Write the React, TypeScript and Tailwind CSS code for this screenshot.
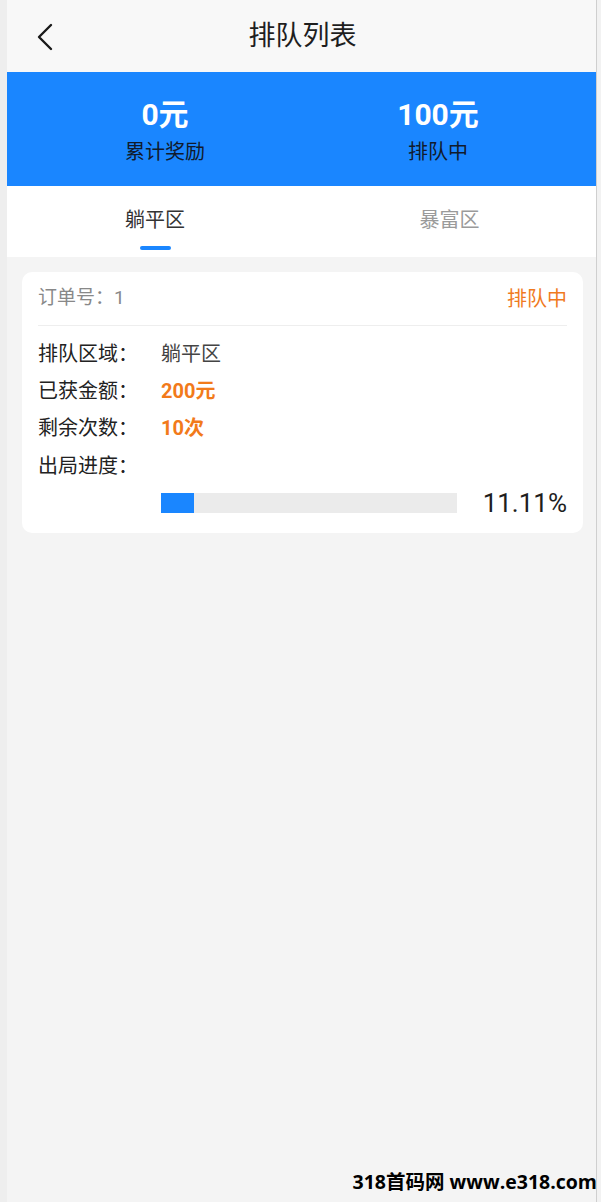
import React from 'react'

const font = { fontFamily: 'Roboto, "Noto Sans CJK SC", sans-serif' }

function Stat({ value, label }: { value: string; label: string }) {
  return (
    <div className="w-[273px] flex flex-col items-center">
      <div className="text-[30px] font-bold text-white leading-[36px]">{value}</div>
      <div className="text-[20px] text-[#111a2c] leading-[28px] mt-[5px]">{label}</div>
    </div>
  )
}

function Row({ label, children }: { label: string; children?: React.ReactNode }) {
  return (
    <div className="flex items-center h-[37px]">
      <div className="w-[123px] text-[20px] text-[#222]">{label}</div>
      {children}
    </div>
  )
}

export default function App() {
  const progress = 11.11
  return (
    <div className="relative flex w-[601px] h-[1202px] overflow-hidden bg-[#f0f0f0]" style={font}>
      <div className="w-[7px] bg-[#eeeeee]" />
      <div className="w-[589px] flex flex-col bg-[#f4f4f4]">
        {/* header */}
        <div className="h-[72px] flex items-center relative bg-[#f8f8f8]">
          <svg className="absolute left-[26px] top-[22px]" width="28" height="30" viewBox="0 0 28 30">
            <path d="M18 3 L6 15 L18 27" fill="none" stroke="#1a1a1a" strokeWidth="2.4" strokeLinecap="round" strokeLinejoin="round" />
          </svg>
          <div className="flex-1 text-center text-[27px] text-[#1e1e1e] pl-[2px]">排队列表</div>
        </div>

        {/* summary */}
        <div className="h-[114px] bg-[#1a86ff] flex justify-center items-center pt-[4px]">
          <Stat value="0元" label="累计奖励" />
          <Stat value="100元" label="排队中" />
        </div>

        {/* tabs */}
        <div className="h-[71px] bg-white flex">
          <div className="w-[296px] flex flex-col items-center pt-[20px]">
            <div className="text-[20px] text-[#333] leading-[28px]">躺平区</div>
            <div className="mt-[12px] w-[31px] h-[4px] rounded-full bg-[#1a86ff]" />
          </div>
          <div className="flex-1 flex flex-col items-center pt-[20px]">
            <div className="text-[20px] text-[#9a9a9a] leading-[28px]">暴富区</div>
          </div>
        </div>

        {/* card */}
        <div className="ml-[15px] mr-[13px] mt-[15px] bg-white rounded-[10px] px-[16px] pb-[13px]">
          <div className="h-[54px] flex items-center justify-between border-b border-[#eeeeee]">
            <div className="text-[19px] text-[#888]">订单号：1</div>
            <div className="text-[20px] text-[#f07a1e]">排队中</div>
          </div>
          <div className="pt-[9px]">
            <Row label="排队区域：">
              <div className="text-[20px] text-[#444]">躺平区</div>
            </Row>
            <Row label="已获金额：">
              <div className="text-[20px] font-bold text-[#f27a1a]">200元</div>
            </Row>
            <Row label="剩余次数：">
              <div className="text-[20px] font-bold text-[#f27a1a]">10次</div>
            </Row>
            <div className="h-[40px] flex items-center text-[20px] text-[#222]">出局进度：</div>
            <div className="flex items-center pl-[123px] h-[34px]">
              <div className="w-[296px] h-[20px] bg-[#ebebeb]">
                <div className="h-full bg-[#1a86ff]" style={{ width: `${progress}%` }} />
              </div>
              <div className="flex-1 text-right text-[26px] text-[#1e1e1e]">{progress}%</div>
            </div>
          </div>
        </div>
      </div>
      <div className="w-[1px] bg-[#cfcfcf]" />
      <div className="flex-1 bg-[#f2f2f2]" />

      <div className="absolute right-[4px] top-[1167px] text-[19.5px] font-bold text-black leading-[30px] whitespace-nowrap" style={{ fontFamily: '"Open Sans", "Noto Sans CJK SC", sans-serif' }}>
        318首码网 www.e318.com
      </div>
    </div>
  )
}
